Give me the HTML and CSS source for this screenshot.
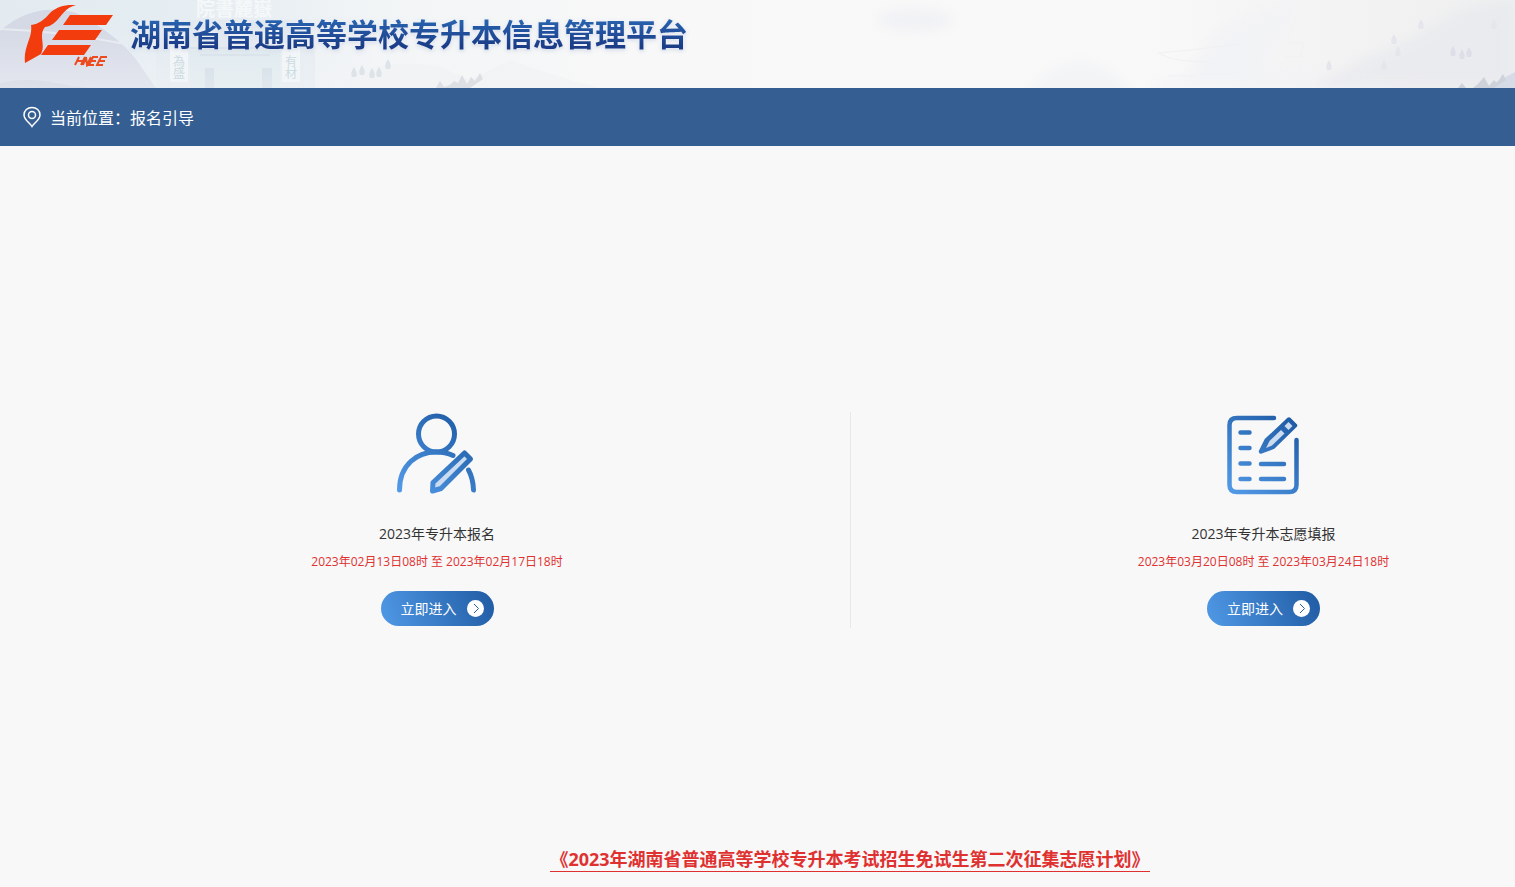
FILE: index.html
```html
<!DOCTYPE html>
<html lang="zh-CN">
<head>
<meta charset="utf-8">
<title>湖南省普通高等学校专升本信息管理平台</title>
<link rel="stylesheet" href="styles.css">
</head>
<body>
<header class="banner">
  <svg class="scenery" viewBox="0 0 1515 88" preserveAspectRatio="xMinYMin slice" aria-hidden="true">
    <defs>
      <linearGradient id="sky" x1="0" x2="1" y1="0" y2="0">
        <stop offset="0" stop-color="#e3ebf0"/><stop offset=".1" stop-color="#e4edf2"/>
        <stop offset=".18" stop-color="#e9eff3"/><stop offset=".25" stop-color="#f2f5f6"/>
        <stop offset=".42" stop-color="#f8f8f8"/><stop offset=".75" stop-color="#f9f9f9"/>
        <stop offset=".85" stop-color="#f4f4f4"/><stop offset="1" stop-color="#eeefef"/>
      </linearGradient>
      <linearGradient id="mist" x1="0" x2="0" y1="0" y2="1">
        <stop offset=".3" stop-color="#f6f6fa" stop-opacity="0"/><stop offset="1" stop-color="#f4f4f8" stop-opacity=".5"/>
      </linearGradient>
      <linearGradient id="ridge" x1="0" x2="0" y1="0" y2="1">
        <stop offset="0" stop-color="#e6e9ed"/><stop offset="1" stop-color="#e8e9ee"/>
      </linearGradient>
      <filter id="soft" x="-50%" y="-100%" width="200%" height="300%"><feGaussianBlur stdDeviation="6"/></filter>
      <path id="tree" d="M0-5Q4 1 2 5H-2Q-4 1 0-5Z"/>
    </defs>
    <rect width="1515" height="88" fill="url(#sky)"/>
    <path d="M0 31Q20 13 45 10Q73 7 92 22Q119 38 135 58L156 88H0Z" fill="#d4d9e5"/>
    <path d="M0 29Q60 31 125 44" fill="none" stroke="#e5eaf0" stroke-width="2"/>
    <path d="M0 83Q30 76 70 86L95 88H0Z" fill="#c8cddb"/>
    <path d="M156 88V45L170 20H300L315 45V88Z" fill="#dfe8ee" opacity=".7"/>
    <path d="M190 88V50H280V88" fill="#dce9ed"/>
    <path d="M200 55H270M185 48H285" stroke="#d3dfe7" stroke-width="2"/>
    <g fill="#f1f6f7"><rect x="170" y="43" width="18" height="39"/><rect x="282" y="43" width="18" height="39"/></g>
    <g fill="#cddae3"><rect x="205" y="68" width="9" height="20"/><rect x="262" y="68" width="10" height="20"/></g>
    <text class="plaque" x="196" y="16">院書麓嶽</text>
    <rect width="440" height="88" fill="url(#mist)"/>
    <text class="couplet" x="179" y="55">為盛</text>
    <text class="couplet" x="291" y="55">有材</text>
    <path d="M350 74Q395 58 440 67L470 80L510 60Q550 75 600 88H350Z" fill="#f0f1f4" opacity=".6"/>
    <g fill="#dde3e8"><use href="#tree" x="354" y="72"/><use href="#tree" x="362" y="70"/><use href="#tree" x="372" y="73"/><use href="#tree" x="379" y="72"/><use href="#tree" x="388" y="64"/></g>
    <path d="M436 88L440 81L444 87L450 85L454 81L458 83L462 75L467 84L471 77L475 81L480 73L483 79L470 88Z" fill="#dcdfe3"/>
    <ellipse cx="915" cy="20" rx="38" ry="12" fill="#f1f2f5" filter="url(#soft)"/>
    <path d="M1020 98Q1080 25 1140 98Z" fill="#f3f4f6" filter="url(#soft)"/>
    <path d="M1190 75Q1210 10 1300 4L1270 65L1350 78V88H1140Z" fill="#f2f3f6" opacity=".8" filter="url(#soft)"/>
    <path d="M1158 53L1190 50L1240 44M1160 54Q1174 62 1210 62M1285 43H1304L1300 57H1283M1168 76H1196M1200 74H1230" fill="none" stroke="#f0f1f3"/>
    <path d="M1310 88L1365 58L1405 42L1460 10L1515 0V88Z" fill="url(#ridge)" opacity=".7" filter="url(#soft)"/>
    <g fill="#e4e6eb"><use href="#tree" x="1421" y="24"/><use href="#tree" x="1394" y="39"/><use href="#tree" x="1398" y="51"/><use href="#tree" x="1329" y="65"/><use href="#tree" x="1384" y="65"/><use href="#tree" x="1494" y="24"/></g>
    <g fill="#dcdfe7"><use href="#tree" x="1453" y="51"/><use href="#tree" x="1462" y="54"/><use href="#tree" x="1469" y="52"/></g>
    <path d="M1500 80L1515 72V88H1485Z" fill="#d6dce7"/>
    <path d="M1458 88L1462 83L1466 88ZM1473 88L1478 84L1484 77L1489 86L1494 80L1497 83L1503 74L1506 80L1494 88Z" fill="#ced2da"/>
  </svg>
  <div class="brand">
    <svg class="logo" viewBox="0 0 90 62" role="img" aria-label="HNEE">
      <g fill="#f23c0e">
        <path d="M52 0C40-1 31 3 26 8C20 15 15 19 7 20C9 33-1 41 1 58L17 49C22 39 14 31 21 22C36 20 36 4 52 0Z"/>
        <path d="M46 10H89L82 20H39ZM35 25H78L71 35H28ZM24 40H67L60 50H17Z"/>
      </g>
      <path d="M55 52L51 60M54 56H59M61 52L57 60M59 60L62 52L63 60L67 52M74 52H69L65 60H70M67 56H72M83 52H77L73 60H79M75 56H81" transform="translate(0 0)" fill="none" stroke="#ed4a20" stroke-width="2"/>
    </svg>
    <h1 class="title">湖南省普通高等学校专升本信息管理平台</h1>
  </div>
</header>
<nav class="crumbs" aria-label="当前位置">
  <svg class="pin" viewBox="0 0 18 22" fill="none" stroke="#fff" stroke-width="1.5" aria-hidden="true"><path d="M9 20.500C7 17 1 14 1 9C1 4.500 4.500 1.500 9 1.500S17 4.500 17 9C17 14 11 17 9 20.500Z"/><circle cx="9" cy="9" r="3.500"/></svg>
  <span>当前位置：报名引导</span>
</nav>
<main class="guide">
  <div class="entries">
    <section class="entry">
      <svg class="entry-icon" viewBox="0 0 84 84" fill="none" stroke="url(#blue)" stroke-width="5" stroke-linecap="round" stroke-linejoin="round" aria-hidden="true">
        <defs><linearGradient id="blue" gradientUnits="userSpaceOnUse" x1="5" y1="80" x2="65" y2="5"><stop offset="0" stop-color="#539be8"/><stop offset="1" stop-color="#205ca6"/></linearGradient></defs>
        <circle cx="41.500" cy="22" r="18"/>
        <path d="M4.500 78C4.500 52 23 40 41 40Q50 40 58 43.500M73.500 58Q78 66 78.500 78"/>
        <path d="M69.500 41L75.500 47L46 76.500L37.500 79L38 70.500Z" fill="#cbdcf0"/>
      </svg>
      <h2 class="entry-name">2023年专升本报名</h2>
      <p class="entry-time">2023年02月13日08时 至 2023年02月17日18时</p>
      <button class="enter" type="button">立即进入<svg class="arrow" viewBox="0 0 17 17" aria-hidden="true"><circle cx="8.500" cy="8.500" r="8.500" fill="#fff"/><path d="M7 4L11.500 8.500L7 13" fill="none" stroke="#285e9c"/></svg></button>
    </section>
    <section class="entry">
      <svg class="entry-icon" viewBox="0 0 84 84" fill="none" stroke="url(#blue)" stroke-width="4.500" stroke-linecap="round" stroke-linejoin="round" aria-hidden="true">
        <path d="M52 6H15Q7.500 6 7.500 13V73Q7.500 80 15 80H67Q74.500 80 74.500 73V28"/>
        <path d="M18.500 20.500H27.500M18.500 36H27.500M18.500 51.500H27.500M18.500 67H27.500M39 52H62M39 67H62"/>
        <path d="M67 7.500L73 13.500L51 35L39 39.500L44.500 28.500Z" fill="#2866b2"/>
        <path d="M59 18L62.500 21.500L50 33.500L44 36L47.500 29Z" fill="#cbdcf0" stroke="none"/>
        <path d="M66.500 10L70.500 14L66.500 18L62.500 14Z" fill="#cbdcf0" stroke="none"/>
      </svg>
      <h2 class="entry-name">2023年专升本志愿填报</h2>
      <p class="entry-time">2023年03月20日08时 至 2023年03月24日18时</p>
      <button class="enter" type="button">立即进入<svg class="arrow" viewBox="0 0 17 17" aria-hidden="true"><circle cx="8.500" cy="8.500" r="8.500" fill="#fff"/><path d="M7 4L11.500 8.500L7 13" fill="none" stroke="#285e9c"/></svg></button>
    </section>
  </div>
  <a class="notice" href="#plan">《2023年湖南省普通高等学校专升本考试招生免试生第二次征集志愿计划》</a>
</main>
</body>
</html>
```
FILE: styles.css
```css
* { box-sizing: border-box; }

body {
  margin: 0;
  overflow-x: hidden;
  background: #f8f8f8;
  color: #333;
  font-family: "Open Sans", "Noto Sans CJK SC", sans-serif;
  font-size: 14px;
}

.banner {
  position: relative;
  height: 88px;
  overflow: hidden;
}

.scenery {
  position: absolute;
  inset: 0;
  width: 100%;
  height: 100%;
}

.plaque {
  fill: #f5f8f9;
  font-family: "Noto Sans CJK TC", sans-serif;
  font-size: 19px;
  font-weight: 700;
}

.couplet {
  fill: #cbdbe2;
  font-family: "Noto Sans CJK TC", sans-serif;
  font-size: 12px;
  writing-mode: vertical-rl;
}

.brand {
  position: relative;
  display: flex;
  align-items: flex-start;
  gap: 16px;
  padding: 5px 24px 0;
}

.logo {
  flex: none;
  width: 90px;
  height: 62px;
}

.title {
  margin: 0;
  padding-top: 7px;
  background: linear-gradient(#2862ae 30%, #1b3d88 80%);
  background-clip: text;
  color: transparent;
  font-size: 31px;
  font-weight: 700;
  line-height: 44px;
  white-space: nowrap;
  filter: drop-shadow(0 0 2px #fff) drop-shadow(0 1px 1px #c4cde0);
}

.crumbs {
  display: flex;
  align-items: center;
  gap: 9px;
  height: 58px;
  padding: 0 23px;
  background: #355f93;
  color: #fff;
  font-size: 16px;
}

.pin {
  width: 18px;
  height: 22px;
}

.guide {
  display: flex;
  flex-direction: column;
  align-items: center;
  min-width: 1700px;
  padding: 266px 24px 12px;
}

.entries {
  display: grid;
  grid-template-columns: 1fr 1fr;
  align-self: stretch;
}

.entry {
  display: flex;
  flex-direction: column;
  align-items: center;
  padding-bottom: 2px;
}

.entry + .entry { border-left: 1px solid #e8e8e8; }

.entry-icon {
  width: 84px;
  height: 84px;
}

.entry-name {
  margin: 28px 0 0;
  font-size: 14px;
  font-weight: 400;
  line-height: 20px;
}

.entry-time {
  margin: 8px 0 0;
  color: #e03131;
  font-size: 12px;
  line-height: 20px;
}

.enter {
  display: flex;
  align-items: center;
  gap: 10px;
  height: 35px;
  margin-top: 19px;
  padding: 0 10px 0 20px;
  border: 0;
  border-radius: 18px;
  background: linear-gradient(70deg, #5099e6, #205ba3);
  color: #fff;
  font: inherit;
  line-height: 20px;
  cursor: pointer;
}

.arrow {
  width: 17px;
  height: 17px;
}

.notice {
  margin-top: 219px;
  border-bottom: 1px solid #e03131;
  color: #e03131;
  font-size: 18px;
  font-weight: 700;
  line-height: 24px;
  text-decoration: none;
}
```
